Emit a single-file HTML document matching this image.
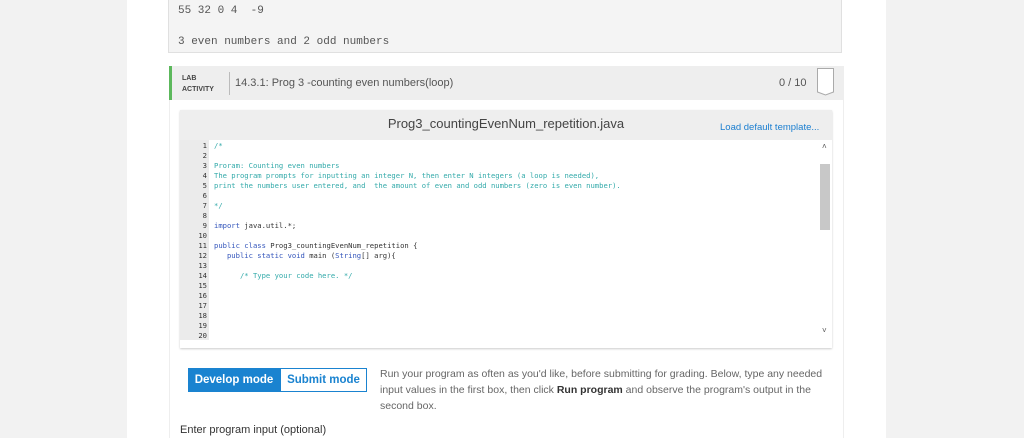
<!DOCTYPE html>
<html><head><style>
*{margin:0;padding:0;box-sizing:border-box}
body{width:1024px;height:438px;overflow:hidden;background:#f2f2f2;font-family:"Liberation Sans",sans-serif;position:relative}
.main{position:absolute;left:127px;top:0;width:759px;height:438px;background:#fff}
.out{position:absolute;left:168px;top:0;width:674px;height:53px;background:#f4f4f4;border:1px solid #e0e0e0;border-top:none;font-family:"Liberation Mono",monospace;font-size:11px;color:#555}
.lab{position:absolute;left:169px;top:66px;width:675px;height:34px;background:#eee;border-left:3px solid #5cb85c}
.body{position:absolute;left:169px;top:100px;width:675px;height:338px;background:#fff;border-left:1px solid #eee;border-right:1px solid #eee}
.ed{position:absolute;left:180px;top:110px;width:652px;height:238px;background:#eee;box-shadow:0 1px 2px #ccc}
.code{position:absolute;left:0;top:30px;width:652px;height:208px;background:#fff}
.gut{position:absolute;left:0;top:0;width:29px;height:200px;background:#ebebeb}
.ln{position:absolute;font-family:"DejaVu Sans Mono",monospace;font-size:7.2px;line-height:10px}
.btn{position:absolute;top:368px;height:24px;font-size:11.5px;font-weight:bold;line-height:22px;text-align:center}
</style></head><body>
<div class="main"></div>
<div class="out"><div style="position:absolute;left:9px;top:5px">55 32 0 4&nbsp; -9</div><div style="position:absolute;left:9px;top:36px">3 even numbers and 2 odd numbers</div></div>
<div class="lab">
<div style="position:absolute;left:10px;top:7px;font-size:7px;font-weight:bold;color:#444;line-height:11px">LAB<br>ACTIVITY</div>
<div style="position:absolute;left:57px;top:6px;width:1px;height:23px;background:#bbb"></div>
<div style="position:absolute;left:63px;top:11px;font-size:11px;color:#555">14.3.1: Prog 3 -counting even numbers(loop)</div>
<div style="position:absolute;left:607px;top:11px;font-size:11px;color:#555">0 / 10</div>
<svg style="position:absolute;left:645px;top:2px" width="18" height="28"><path d="M0.5 0.5H16.5V24L8.5 27L0.5 24Z" fill="#fff" stroke="#aaa"/></svg>
</div>
<div class="body"></div>
<div class="ed">
<div style="position:absolute;left:0;width:652px;top:6px;text-align:center;font-size:13px;color:#444">Prog3_countingEvenNum_repetition.java</div>
<div style="position:absolute;left:540px;top:12px;font-size:9.5px;color:#1a7ed0">Load default template...</div>
<div class="code"><div class="gut"></div>
<div style="position:absolute;left:640px;top:24px;width:10px;height:66px;background:#c8c8c8"></div>
<div style="position:absolute;left:642px;top:2px;font-size:8px;color:#555">˄</div>
<div style="position:absolute;left:642px;top:186px;font-size:8px;color:#555">˅</div>
<div class="ln" style="left:0;top:1px;width:27px;text-align:right;color:#333">1<br>2<br>3<br>4<br>5<br>6<br>7<br>8<br>9<br>10<br>11<br>12<br>13<br>14<br>15<br>16<br>17<br>18<br>19<br>20</div>
<div class="ln" style="left:34px;top:1px;white-space:pre;color:#3aa"><span>/*</span>

Proram: Counting even numbers
The program prompts for inputting an integer N, then enter N integers (a loop is needed),
print the numbers user entered, and  the amount of even and odd numbers (zero is even number).

*/

<span style="color:#3355bb">import</span><span style="color:#333"> java.util.*;</span>

<span style="color:#3355bb">public class</span><span style="color:#333"> Prog3_countingEvenNum_repetition {</span>
   <span style="color:#3355bb">public static void</span><span style="color:#333"> main (</span><span style="color:#3355bb">String</span><span style="color:#333">[] arg){</span>

      /* Type your code here. */</div>
</div></div>
<div class="btn" style="left:188px;width:92px;background:#1a83d0;color:#fff;border:1px solid #1a83d0">Develop mode</div>
<div class="btn" style="left:280px;width:87px;background:#fff;color:#1a83d0;border:1px solid #1a83d0">Submit mode</div>
<div style="position:absolute;left:380px;top:366px;width:460px;font-size:10.5px;line-height:16px;color:#666">Run your program as often as you'd like, before submitting for grading. Below, type any needed input values in the first box, then click <b style="color:#333">Run program</b> and observe the program's output in the second box.</div>
<div style="position:absolute;left:180px;top:424px;font-size:11px;color:#333">Enter program input (optional)</div>
</body></html>
